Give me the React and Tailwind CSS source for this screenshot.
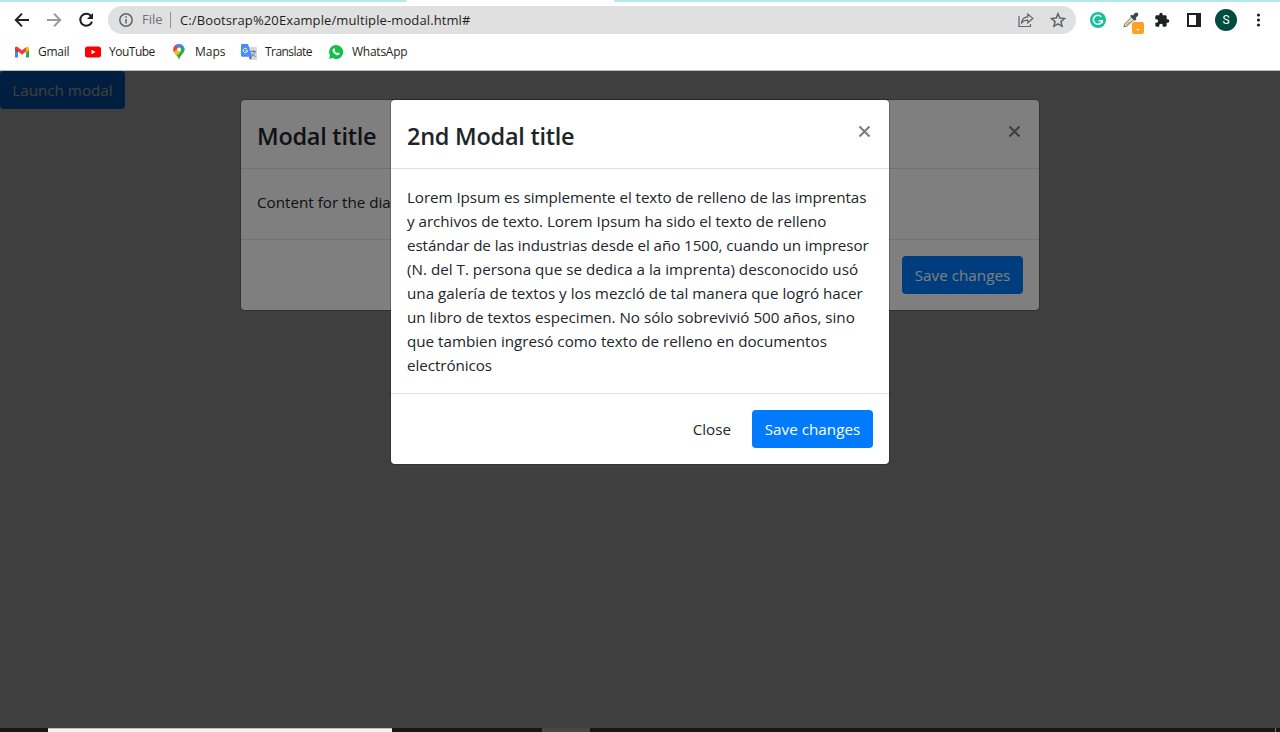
import React from "react";

const Chrome = () => (
  <header className="h-[71px] border-b border-[#b9bdc1] bg-white font-['Open_Sans',sans-serif] text-[12px] text-[#1f1f22]">
    <div className="flex h-[2px] bg-white">
      <div className="w-[407px] rounded-br-[2px] bg-[#b4e8f3]" />
      <div className="w-[207px] bg-white" />
      <div className="flex-1 rounded-bl-[2px] bg-[#b4e8f3]" />
    </div>
    <div className="flex h-[36px] items-center">
      <svg className="ml-[14px] h-4 w-4" viewBox="0 0 16 16" fill="none" stroke="#202124" strokeWidth="2"><path d="M15 8H2.4M8 1.6 1.8 8 8 14.4" /></svg>
      <svg className="ml-4 h-4 w-4" viewBox="0 0 16 16" fill="none" stroke="#9b9b9d" strokeWidth="2"><path d="M1 8h12.6M8 1.6 14.2 8 8 14.4" /></svg>
      <svg className="ml-4 h-4 w-4" viewBox="0 0 16 16"><path d="M13.2 4.2A6 6 0 1 0 14 9.6" fill="none" stroke="#202124" strokeWidth="2.1" /><path d="M15 1v6H9z" fill="#202124" /></svg>
      <div className="ml-[14px] flex h-7 w-[968px] items-center rounded-full bg-[#e0e0e0]">
        <svg className="ml-[11px] h-[14px] w-[14px] shrink-0" viewBox="0 0 14 14" fill="none" stroke="#5f6368" strokeWidth="1.5"><circle cx="7" cy="7" r="6.2" /><path d="M7 6v4.5M7 3.2v1.6" /></svg>
        <span className="ml-[9px] w-[28px] whitespace-nowrap text-[13px] text-[#6d7175]">File</span>
        <span className="h-4 w-px bg-[#8f9194]" />
        <span className="ml-[9px] flex-1 whitespace-nowrap pt-px text-[13px] tracking-[0.11px]">C:/Bootsrap%20Example/multiple-modal.html#</span>
        <svg className="h-[16px] w-[16px]" viewBox="0 0 16 16" fill="none" stroke="#5f6368" strokeWidth="1.2"><path d="M1 4v10.5h11.5V12M3.6 10.8c.4-3.8 2.5-5.7 6.2-5.9V2l5 4.4-5 4.4V8.1c-2.900 0-4.700.8-6.200 2.700z" /></svg>
        <svg className="mr-[10px] ml-4 h-[16px] w-[16px]" viewBox="0 0 15 15" fill="none" stroke="#5f6368" strokeWidth="1.4"><path d="m7.500 1.600 1.700 4.100 4.500.4-3.400 2.900 1 4.400-3.800-2.300-3.800 2.300 1-4.400L1.300 6.100l4.500-.4z" /></svg>
      </div>
      <svg className="ml-[14px] h-4 w-4" viewBox="0 0 16 16"><circle cx="8" cy="8" r="8" fill="#15c39a" /><path d="M11.300 4.800A4.500 4.500 0 1 0 12.300 8.700H8.600M10.400 8.700l1.900 0v2.600" fill="none" stroke="#fff" strokeWidth="1.500" /></svg>
      <div className="relative ml-[17px] h-4 w-4">
        <svg className="h-4 w-4" viewBox="0 0 16 16"><path d="m.8 14.800.8-2.700 6.800-6.800 2.400 2.400-6.900 6.500z" fill="#e7e0d5" stroke="#77736d" strokeWidth="1" /><path d="m2.500 13.300 4-3.900 2 .3-4.200 4z" fill="#e99b38" /><path d="m7 3.900 1.600-1.200 1.300.9L11.800 1.200C13.700-.6 16.300 1.600 14.900 3.700l-2.400 2.200 1 1.300-1.600 1.600z" fill="#3e4549" /></svg>
        <div className="absolute top-[10px] left-[9px] flex h-3 w-3 items-center justify-center rounded-[2px] bg-[#ffa126] text-[9px] leading-none font-bold text-white">-</div>
      </div>
      <svg className="ml-[15px] h-4 w-4" viewBox="0 0 24 24" fill="#202124"><path d="M20.500 11H19V7c0-1.100-.9-2-2-2h-4V3.500a2.500 2.500 0 0 0-5 0V5H4c-1.100 0-2 .9-2 2v3.800h1.500a2.700 2.700 0 0 1 0 5.400H2V20c0 1.100.9 2 2 2h3.800v-1.500a2.700 2.700 0 0 1 5.400 0V22H17c1.100 0 2-.9 2-2v-4h1.500a2.500 2.500 0 0 0 0-5z" /></svg>
      <div className="ml-[17px] h-[14px] w-[14px] border-2 border-r-[5px] border-[#202124]" />
      <div className="ml-[14px] flex h-[22px] w-[22px] items-center justify-center rounded-full bg-[#004d40] font-[Roboto,sans-serif] text-[12px] text-white">S</div>
      <svg className="ml-[19px] h-4 w-[5px]" viewBox="0 0 5 16" fill="#202124"><circle cx="2.500" cy="3" r="1.600" /><circle cx="2.500" cy="8" r="1.600" /><circle cx="2.500" cy="13" r="1.600" /></svg>
    </div>
    <nav className="flex h-[28px] items-center">
      <a className="ml-[14px] flex w-[71px] items-center">
        <svg className="mr-2 h-4 w-4" viewBox="0 0 16 16"><path d="M1 4v9.500h3V6z" fill="#4285f4" /><path d="M12 6v7.500h2.300c.4 0 .7-.3.700-.7V4z" fill="#34a853" /><path d="M12 3.500 14 2.500 15 4v2l-3 2.500z" fill="#fbbc04" /><path d="M1 5C.7 2.700 2.500 2 4 3.200l4 3 4-3v4.300l-4 3.200-4-3.200z" fill="#ea4335" /><path d="M1 4.500 4 7v1.500L1 6z" fill="#c5221f" /></svg>
        <span className="tracking-[-0.25px]">Gmail</span>
      </a>
      <a className="flex w-[86px] items-center">
        <svg className="mr-2 h-4 w-4" viewBox="0 0 16 16"><rect y="2.500" width="16" height="11" rx="2.500" fill="red" /><path d="m6.500 5.700 4 2.300-4 2.300z" fill="#fff" /></svg>
        <span className="tracking-[-0.5px]">YouTube</span>
      </a>
      <a className="flex w-[70px] items-center">
        <svg className="mr-2 h-4 w-4" viewBox="0 0 16 16">
          <clipPath id="pin"><path d="M8 0a5.500 5.500 0 0 0-5.500 5.500C2.500 9.500 7 11 8 16c1-5 5.500-6.500 5.500-10.500A5.500 5.500 0 0 0 8 0z" /></clipPath>
          <g clipPath="url(#pin)">
            <path d="M0 0h16v16H0z" fill="#34a853" />
            <path d="M2 11 13 0H0v11z" fill="#fbbc04" />
            <path d="M3 10.500 14 3v3L6.500 13z" fill="#34a853" />
            <path d="m3 10.500 5-5 2 2-5 5z" fill="#fbbc04" />
            <path d="M0 0h4l4 5.500-5 5H0z" fill="#ea4335" />
            <path d="m3.500 2 4.500 4L3.500 10 7 7 11 3l3.500-3H5z" fill="#4285f4" />
            <path d="M0 0h3.700l4 5L2.500 9z" fill="#ea4335" />
            <path d="m2 8 4-2.500 1.500 2L4 11.500z" fill="#fbbc04" />
          </g>
          <circle cx="8" cy="5.500" r="2" fill="#fff" />
        </svg>
        <span>Maps</span>
      </a>
      <a className="flex w-[87px] items-center">
        <svg className="mr-2 h-4 w-4 shrink-0" viewBox="0 0 16 16"><path d="M6 3h9a1 1 0 0 1 1 1v11a1 1 0 0 1-1 1H9z" fill="#d8d8d8" /><path d="M9.500 7.500H15M12.200 6v1.500M14 7.500c-.5 2.300-2 4-3.500 5M11 9.500l3.500 3.500" fill="none" stroke="#6b7b86" strokeWidth="1" /><path d="M8 12.500h3L9 16z" fill="#2953c6" /><path d="M1 0h6l4.200 12.800H1.200A1.200 1.200 0 0 1 0 11.600V1a1 1 0 0 1 1-1z" fill="#4b8df8" /><path d="M6.100 5.100A2.200 2.200 0 1 0 6.600 6.700H4.500" fill="none" stroke="#fff" strokeWidth="1" /></svg>
        <span className="tracking-[-0.55px]">Translate</span>
      </a>
      <a className="flex items-center">
        <svg className="mr-2 h-4 w-4" viewBox="0 0 16 16"><path d="M8 1a7 7 0 0 0-6 10.500L1 15l3.600-1A7 7 0 1 0 8 1z" fill="#12c246" /><path d="M5.600 4.500c.3-.2.800-.2 1 .2l.5 1.200c.1.400-.5.800-.4 1.100.5.900 1.200 1.600 2.200 2 .4.100.7-.7 1.100-.6l1.300.6c.4.200.2 1-.1 1.400-.6.800-1.800.9-2.900.5C6.600 10.200 5 8.500 4.500 6.800c-.2-.9.300-1.800 1.100-2.300z" fill="#fff" /></svg>
        <span className="tracking-[-0.25px]">WhatsApp</span>
      </a>
    </nav>
  </header>
);

const Modal = ({ width, title, children, close }) => (
  <div className={`${width} self-start rounded-[5px] border border-black/20 bg-white bg-clip-padding`}>
    <div className="flex h-[69px] justify-between border-b border-[#dee2e6] px-4 pt-4">
      <h4 className="pt-px font-['Open_Sans',sans-serif] text-[23.500px] leading-[38px] font-[550] tracking-[-0.260px]">{title}</h4>
      <svg className="mt-[9px] mr-[2px] h-[13px] w-[13px]" viewBox="0 0 13 13" stroke="#7f7f7f" strokeWidth="2.200"><path d="m1.500 1.500 10 10M11.500 1.500l-10 10" /></svg>
    </div>
    {children}
    <div className="flex h-[71px] items-center justify-end border-t border-[#dee2e6] px-4">
      {close && <span className="mr-[21px]">Close</span>}
      <button className="h-[38px] w-[121px] rounded-[4px] bg-[#007bff] tracking-[0.03px] text-white">Save changes</button>
    </div>
  </div>
);

const LINES = [
  ["Lorem Ipsum es simplemente el texto de relleno de las imprentas", "tracking-[-0.065px]"],
  ["y archivos de texto. Lorem Ipsum ha sido el texto de relleno", "tracking-[-0.035px]"],
  ["estándar de las industrias desde el año 1500, cuando un impresor", "tracking-[-0.075px]"],
  ["(N. del T. persona que se dedica a la imprenta) desconocido usó", "tracking-[0.01px]"],
  ["una galería de textos y los mezcló de tal manera que logró hacer", "tracking-[0.01px]"],
  ["un libro de textos especimen. No sólo sobrevivió 500 años, sino", "tracking-[-0.01px]"],
  ["que tambien ingresó como texto de relleno en documentos", "tracking-normal"],
  ["electrónicos", "tracking-[-0.06px]"],
];

export default function App() {
  return (
    <div className="flex h-[732px] w-[1280px] flex-col overflow-hidden">
      <Chrome />
      <main className="relative h-[657px] bg-white font-['Open_Sans',sans-serif] text-[15.200px] leading-6 text-[#212529]">
        <button className="block h-[38px] w-[125px] rounded-[4px] bg-[#007bff] text-white">Launch modal</button>
        <div className="absolute inset-0 bg-black/50" />
        <div className="absolute inset-0 flex justify-center pt-[28px]">
          <Modal width="w-[800px]" title="Modal title">
            <div className="h-[70px] px-4 pt-[21px]">Content for the dia</div>
          </Modal>
        </div>
        <div className="absolute inset-0 bg-black/50" />
        <div className="absolute inset-0 flex justify-center pt-[28px]">
          <Modal width="w-[500px]" title="2nd Modal title" close>
            <div className="p-4">
              {LINES.map(([line, tracking]) => (
                <div key={line} className={`whitespace-nowrap ${tracking}`}>{line}</div>
              ))}
            </div>
          </Modal>
        </div>
      </main>
      <footer className="flex h-1 bg-[#191617]">
        <div className="ml-12 w-[344px] border-t border-[#bcbcbc] bg-[#f3f2f2]" />
        <div className="ml-[150px] w-12 bg-[#484646]" />
        <div className="ml-[685px] w-px bg-[#777]" />
      </footer>
    </div>
  );
}
